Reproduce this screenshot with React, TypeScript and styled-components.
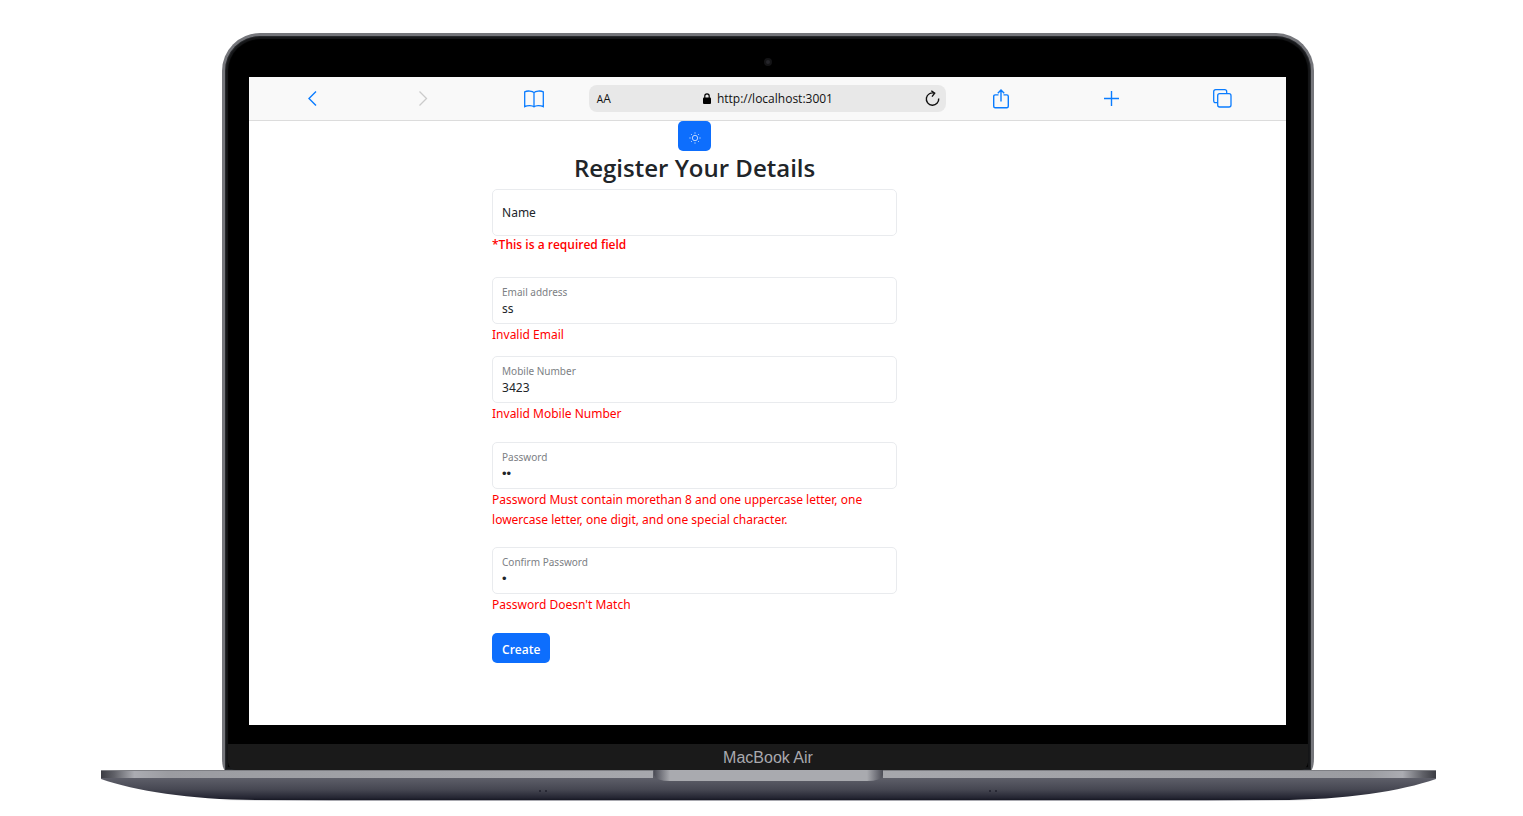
import React, { useState } from "react";
import styled, { createGlobalStyle, css } from "styled-components";

const GlobalStyle = createGlobalStyle`
  *, *::before, *::after { box-sizing: border-box; }
  body {
    margin: 0;
    background: #fff;
    color: #212529;
    font-family: "Noto Sans", "Open Sans", sans-serif;
    font-size: 12px;
    line-height: 20px;
  }
`;

const Stage = styled.main`
  padding: 33px 87px 15px 101px;
`;

const Lid = styled.div`
  margin: 0 122px 0 121px;
  border: solid #75767b;
  border-width: 3px 3px 0;
  border-radius: 38px 38px 3px 3px / 38px 38px 12px 12px;
  background: #000;
  box-shadow: inset 0 0 0 1px #26282b, inset 0 0 1px 3px #17181a;
  overflow: hidden;
`;

const Bezel = styled.div`
  display: flex;
  justify-content: center;
  align-items: center;
  height: 41px;
  padding-top: 10px;
`;

const Camera = styled.span`
  width: 8px;
  height: 8px;
  border: 2px solid #141416;
  border-radius: 50%;
  background: #26262b;
`;

const Screen = styled.section`
  margin: 0 25px 19px 24px;
  background: #fff;
`;

const Chin = styled.div`
  margin: 0 3px;
  height: 26px;
  border-radius: 0 0 8px 8px;
  background: #1a1a1a;
  color: #a9a9ae;
  font-family: "Liberation Sans", Arial, sans-serif;
  font-size: 16px;
  line-height: 28px;
  text-align: center;
`;

const Base = styled.svg`
  display: block;
  width: 100%;
  height: 31px;
`;

const BrowserBar = styled.nav`
  display: grid;
  grid-template-columns: repeat(3, 1fr) minmax(0, 3.23fr) repeat(3, 1fr);
  align-items: center;
  height: 44px;
  padding: 0 8px;
  border-bottom: 1px solid #dcdcdc;
  background: #f9f9f9;
`;

const BarButton = styled.button<{ $muted?: boolean }>`
  display: flex;
  justify-self: center;
  padding: 0;
  border: 0;
  background: none;
  color: ${(p) => (p.$muted ? "#cbcbcb" : "#0a7cff")};

  svg {
    fill: none;
    stroke: currentColor;
  }
`;

const AddressBar = styled.div`
  display: flex;
  align-items: center;
  justify-content: space-between;
  height: 27px;
  padding: 0 6px 0 8px;
  border-radius: 8px;
  background: #e8e8e8;
  color: #111;
`;

const TextSize = styled.button`
  padding: 1px 0 0;
  border: 0;
  background: none;
  color: #111;
  font: 12px/20px "Open Sans", sans-serif;

  small {
    font-size: 10px;
  }
`;

const Address = styled.span`
  display: flex;
  align-items: center;
  gap: 6px;
  font-family: "Open Sans", sans-serif;
`;

const ReloadButton = styled(BarButton)`
  color: #111;
`;

const Page = styled.div`
  display: grid;
  grid-template-columns: 3fr 5fr 4.8fr;
  padding-bottom: 62px;
`;

const Form = styled.form`
  grid-column: 2;
  display: flex;
  flex-direction: column;
`;

const buttonBase = css`
  border: 0;
  border-radius: 5px;
  background: #0d6efd;
  color: #fff;
  height: 30px;
  font-family: inherit;
`;

const ThemeButton = styled.button`
  ${buttonBase}
  display: flex;
  align-items: center;
  justify-content: center;
  align-self: center;
  width: 33px;
  padding: 4px 0 0;
`;

const Title = styled.h1`
  margin: 0 0 4px;
  font-family: "Open Sans", "Noto Sans", sans-serif;
  font-size: 24px;
  font-weight: 600;
  line-height: 34px;
  text-align: center;
`;

const Group = styled.div<{ $gap: number }>`
  margin-bottom: ${(p) => p.$gap}px;
`;

const FieldBox = styled.div`
  position: relative;
`;

const Input = styled.input`
  display: block;
  width: 100%;
  height: 47px;
  padding: 18px 9px 2px;
  border: 1px solid #e9ebee;
  border-radius: 5px;
  background: #fff;
  color: #212529;
  font: 12px/20px "Noto Sans", "Open Sans", sans-serif;
  outline: none;

  &[type="password"] {
    font-family: "Liberation Sans", sans-serif;
    font-size: 13px;
  }
`;

const Label = styled.label<{ $floating: boolean }>`
  position: absolute;
  left: 10px;
  pointer-events: none;
  ${(p) =>
    p.$floating
      ? css`
          top: 5px;
          color: #7c8084;
          font-size: 10px;
        `
      : css`
          top: 14px;
        `}
`;

const ErrorText = styled.p<{ $strong?: boolean }>`
  margin: 0;
  padding-top: ${(p) => (p.$strong ? 0 : 1)}px;
  color: #f00;
  font-family: ${(p) => (p.$strong ? '"Open Sans", sans-serif' : "inherit")};
  font-weight: ${(p) => (p.$strong ? 600 : 400)};
  line-height: ${(p) => (p.$strong ? 18 : 20)}px;
`;

const CreateButton = styled.button`
  ${buttonBase}
  align-self: flex-start;
  padding: 2px 10px 0;
  font-family: "Open Sans", sans-serif;
  font-size: 12px;
  font-weight: 600;
`;

type FieldProps = {
  id: string;
  label: string;
  type?: string;
  initial: string;
  error: string;
  strong?: boolean;
  gap: number;
};

function Field({ id, label, type = "text", initial, error, strong, gap }: FieldProps) {
  const [value, setValue] = useState(initial);
  return (
    <Group $gap={gap}>
      <FieldBox>
        <Input
          id={id}
          type={type}
          value={value}
          aria-describedby={`${id}-error`}
          onChange={(e) => setValue(e.target.value)}
        />
        <Label htmlFor={id} $floating={value !== ""}>
          {label}
        </Label>
      </FieldBox>
      <ErrorText id={`${id}-error`} $strong={strong}>
        {error}
      </ErrorText>
    </Group>
  );
}

const fields: FieldProps[] = [
  { id: "name", label: "Name", initial: "", error: "*This is a required field", strong: true, gap: 23 },
  { id: "email", label: "Email address", initial: "ss", error: "Invalid Email", gap: 11 },
  { id: "mobile", label: "Mobile Number", initial: "3423", error: "Invalid Mobile Number", gap: 18 },
  {
    id: "password",
    label: "Password",
    type: "password",
    initial: "ab",
    error:
      "Password Must contain morethan 8 and one uppercase letter, one lowercase letter, one digit, and one special character.",
    gap: 17,
  },
  { id: "confirm", label: "Confirm Password", type: "password", initial: "a", error: "Password Doesn't Match", gap: 18 },
];

function LaptopBase() {
  return (
    <Base viewBox="0 0 1335 31" preserveAspectRatio="none" aria-hidden="true">
      <defs>
        <linearGradient id="deck" x1="0" x2="1" y1="0" y2="0">
          <stop offset="0" stopColor="#3b3c43" />
          <stop offset="0.01" stopColor="#606168" />
          <stop offset="0.025" stopColor="#abacb2" />
          <stop offset="0.05" stopColor="#9b9ca1" />
          <stop offset="0.5" stopColor="#a9aaaf" />
          <stop offset="0.95" stopColor="#9b9ca1" />
          <stop offset="0.975" stopColor="#abacb2" />
          <stop offset="0.99" stopColor="#606168" />
          <stop offset="1" stopColor="#3b3c43" />
        </linearGradient>
        <linearGradient id="under" x1="0" x2="0" y1="0" y2="1">
          <stop offset="0" stopColor="#60616b" />
          <stop offset="0.55" stopColor="#464752" />
          <stop offset="0.9" stopColor="#252633" />
          <stop offset="1" stopColor="#171824" />
        </linearGradient>
        <linearGradient id="notch" x1="0" x2="1" y1="0" y2="0">
          <stop offset="0" stopColor="#4b4c55" />
          <stop offset="0.03" stopColor="#74757d" />
          <stop offset="0.07" stopColor="#a9aaaf" />
          <stop offset="0.93" stopColor="#a9aaaf" />
          <stop offset="0.97" stopColor="#74757d" />
          <stop offset="1" stopColor="#4b4c55" />
        </linearGradient>
        <linearGradient id="rim" gradientUnits="userSpaceOnUse" x1="120" x2="1215" y1="0" y2="0">
          <stop offset="0" stopColor="#a9a9b0" stopOpacity="0" />
          <stop offset="0.1" stopColor="#a9a9b0" />
          <stop offset="0.9" stopColor="#a9a9b0" />
          <stop offset="1" stopColor="#a9a9b0" stopOpacity="0" />
        </linearGradient>
      </defs>
      <path d="M0 7 H1335 V9 C1300 21 1245 30 1175 30 H160 C90 30 35 21 0 9 Z" fill="url(#under)" />
      <rect width="1335" height="8" fill="url(#deck)" />
      <rect width="1335" height="1" fill="#7e7f84" />
      <rect x="552" width="230" height="9" fill="#5a5b64" />
      <path d="M553 0 H782 V5 Q780 11 766 11 H569 Q555 11 553 5 Z" fill="url(#notch)" />
      <rect x="120" y="30" width="1095" height="1" fill="url(#rim)" />
      <g fill="#20212c">
        <circle cx="439" cy="21" r="1" />
        <circle cx="445" cy="21" r="1" />
        <circle cx="889" cy="21" r="1" />
        <circle cx="895" cy="21" r="1" />
      </g>
    </Base>
  );
}

export default function App() {
  return (
    <>
      <GlobalStyle />
      <Stage>
        <Lid>
          <Bezel>
            <Camera />
          </Bezel>
          <Screen>
            <BrowserBar aria-label="Browser">
              <BarButton aria-label="Back">
                <svg width="10" height="16" viewBox="0 0 10 16" strokeWidth="1.4">
                  <path d="M9 .5 2 7.500l7 7" />
                </svg>
              </BarButton>
              <BarButton $muted aria-label="Forward">
                <svg width="10" height="16" viewBox="0 0 10 16" strokeWidth="1.3">
                  <path d="M1.500.5l7 7-7 7" />
                </svg>
              </BarButton>
              <BarButton aria-label="Bookmarks">
                <svg width="20" height="18" viewBox="0 0 20 18" strokeWidth="1.3">
                  <path d="M10 2.600C8.500.9 3.500.4.700 1.800v14.800C3.500 15.200 8.500 15.300 10 16.900c1.500-1.600 6.500-1.700 9.300-.3V1.800C16.500.4 11.500.9 10 2.600zM10 2.600v14" />
                </svg>
              </BarButton>
              <AddressBar>
                <TextSize aria-label="Text size">
                  <small>A</small>A
                </TextSize>
                <Address>
                  <svg width="8" height="11" viewBox="0 0 8 11">
                    <rect y="4.500" width="8" height="6.500" rx="1" fill="#000" />
                    <path d="M1.800 5V3a2.200 2.200 0 0 1 4.400 0v2" fill="none" stroke="#000" strokeWidth="1.2" />
                  </svg>
                  http://localhost:3001
                </Address>
                <ReloadButton aria-label="Reload">
                  <svg width="15" height="17" viewBox="0 0 15 17" strokeWidth="1.4">
                    <path d="M13.700 8.500A6.200 6.200 0 1 1 9.500 3.200M6.300.7 9.700 3.200 7 6.600" />
                  </svg>
                </ReloadButton>
              </AddressBar>
              <BarButton aria-label="Share">
                <svg width="16" height="20" viewBox="0 0 16 20" strokeWidth="1.4">
                  <path d="M5.500 5.900H2.200Q.7 5.900.7 7.400v9.900q0 1.500 1.500 1.500h11.600q1.500 0 1.500-1.500V7.400q0-1.500-1.500-1.500h-3.300M8 12.500V1M4.800 4.200 8 1l3.200 3.200" />
                </svg>
              </BarButton>
              <BarButton aria-label="New tab">
                <svg width="16" height="16" viewBox="0 0 16 16" strokeWidth="1.4">
                  <path d="M7.500 0v15M0 7.500h15" />
                </svg>
              </BarButton>
              <BarButton aria-label="Tabs">
                <svg width="19" height="19" viewBox="0 0 19 19" strokeWidth="1.3">
                  <rect x="4.700" y="4.700" width="13.300" height="13.300" rx="2" />
                  <path d="M4.700 13.700H2.700q-2 0-2-2v-9q0-2 2-2h9q2 0 2 2v2" />
                </svg>
              </BarButton>
            </BrowserBar>
            <Page>
              <Form onSubmit={(e) => e.preventDefault()}>
                <ThemeButton type="button" aria-label="Toggle theme">
                  <svg width="12" height="12" viewBox="0 0 12 12" fill="none" stroke="#fff" strokeWidth="0.7">
                    <circle cx="6" cy="6" r="2.700" />
                    <path d="M6 .3v1.400M6 10.300v1.400M.3 6h1.400M10.300 6h1.400M2 2l.9.9M9.100 9.100l.9.9M10 2l-.9.9M2.900 9.100 2 10" />
                  </svg>
                </ThemeButton>
                <Title>Register Your Details</Title>
                {fields.map((f) => (
                  <Field key={f.id} {...f} />
                ))}
                <CreateButton type="submit">Create</CreateButton>
              </Form>
            </Page>
          </Screen>
          <Chin>MacBook Air</Chin>
        </Lid>
        <LaptopBase />
      </Stage>
    </>
  );
}
